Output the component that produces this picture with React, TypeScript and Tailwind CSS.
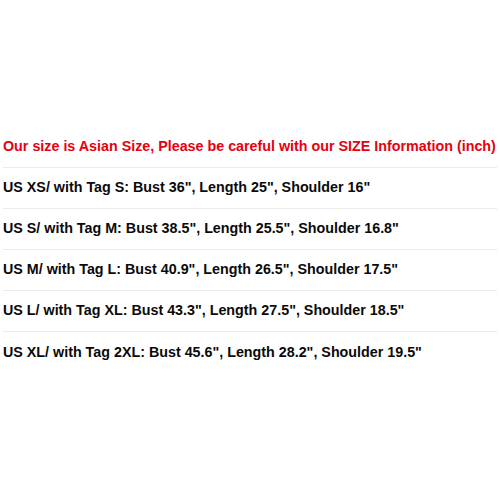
const rows = [
  'US XS/ with Tag S: Bust 36", Length 25", Shoulder 16"',
  'US S/ with Tag M: Bust 38.5", Length 25.5", Shoulder 16.8"',
  'US M/ with Tag L: Bust 40.9", Length 26.5", Shoulder 17.5"',
  'US L/ with Tag XL: Bust 43.3", Length 27.5", Shoulder 18.5"',
  'US XL/ with Tag 2XL: Bust 45.6", Length 28.2", Shoulder 19.5"',
];

export default function App() {
  return (
    <div className="w-[500px] h-[500px] bg-white flex flex-col justify-center px-[3px] font-['Liberation_Sans',Arial,sans-serif] font-bold text-[14.3px]">
      <div className="h-[41px] flex items-center border-b border-[#ebebeb] text-[#e8000f] whitespace-nowrap">
        Our size is Asian Size, Please be careful with our SIZE Information (inch)
      </div>
      {rows.map((r, i) => (
        <div
          key={i}
          className={
            i < rows.length - 1
              ? 'h-[41px] flex items-center border-b border-[#ebebeb] text-[#0a0a0a] whitespace-nowrap'
              : 'h-[41px] flex items-center text-[#0a0a0a] whitespace-nowrap'
          }
        >
          {r}
        </div>
      ))}
    </div>
  );
}
